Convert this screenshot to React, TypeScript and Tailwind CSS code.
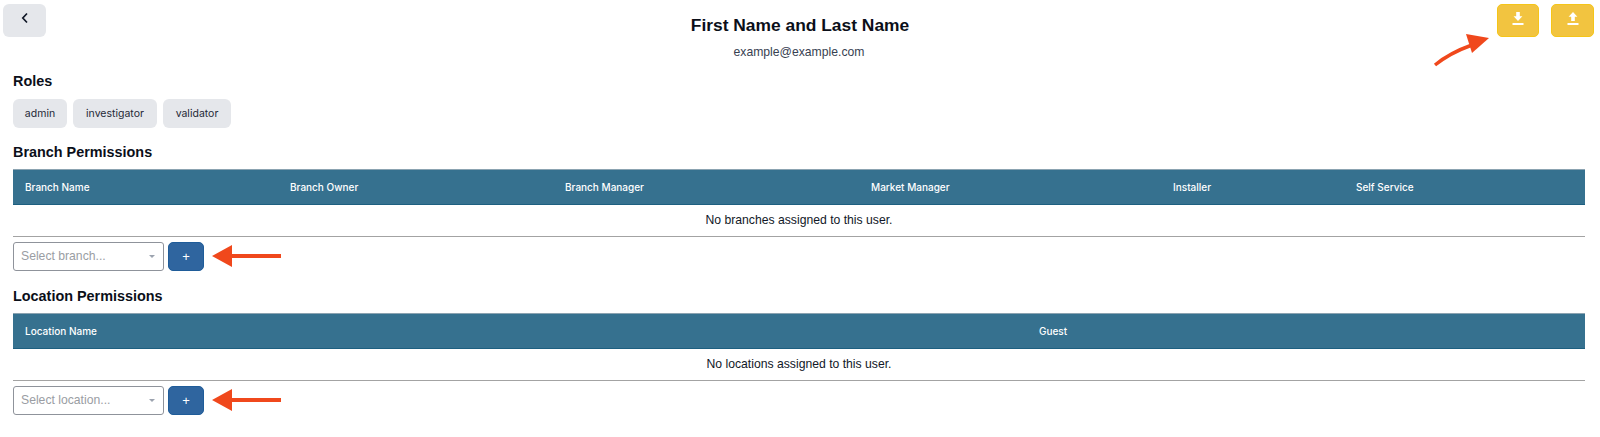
const ArrowLeft = ({ className }: { className: string }) => (
  <svg className={className} width="70" height="22" viewBox="0 0 70 22" fill="none">
    <path d="M0 11 L20 0 L20 9 L69 9 L69 13 L20 13 L20 22 Z" fill="#f0481c" />
  </svg>
);

const Download = () => (
  <svg width="12" height="13" viewBox="0 0 12 13" fill="white">
    <path d="M4.2 0h3.6v4.2h2.6L6 9 1.6 4.2h2.6z" />
    <rect x="0.5" y="11" width="11" height="2" />
  </svg>
);

const Upload = () => (
  <svg width="12" height="13" viewBox="0 0 12 13" fill="white">
    <path d="M6 0l4.4 4.8H7.8V9H4.2V4.8H1.6z" />
    <rect x="0.5" y="11" width="11" height="2" />
  </svg>
);

function AddRow({ placeholder }: { placeholder: string }) {
  return (
    <div className="mt-[5px] flex items-center gap-[4px]">
      <div className="flex h-[29px] w-[151px] items-center justify-between rounded-[3px] border border-[#8f939b] bg-white pl-[7px] pr-[8px] text-[12.2px] text-[#9a9da3]">
        <span>{placeholder}</span>
        <span className="h-0 w-0 border-x-[3.5px] border-t-[3.5px] border-x-transparent border-t-[#9ca3af]" />
      </div>
      <button className="flex h-[29px] w-[36px] items-center justify-center rounded-[5px] border border-[#1f5c99] bg-[#2f659f] text-[13px] text-white">
        +
      </button>
      <ArrowLeft className="ml-[4px] -mt-[2px]" />
    </div>
  );
}

function PermissionTable({
  columns,
  empty,
}: {
  columns: { name: string; width: string }[];
  empty: string;
}) {
  return (
    <table className="mt-[8px] w-full table-fixed border-b border-[#a3a3a3]">
      <thead>
        <tr className="h-[35px] border-y border-t-[#8ba3b1] border-b-[#1d5f80] bg-[#36718f] text-left text-white">
          {columns.map((col) => (
            <th key={col.name} className={`${col.width} pl-[12px] font-['Inter',sans-serif] text-[10px] font-medium`}>
              {col.name}
            </th>
          ))}
        </tr>
      </thead>
      <tbody>
        <tr className="h-[32px] text-center text-[12.2px] text-[#111827]">
          <td colSpan={columns.length}>{empty}</td>
        </tr>
      </tbody>
    </table>
  );
}

export default function App() {
  return (
    <div className="h-[437px] overflow-hidden bg-white font-['Liberation_Sans',Arial,sans-serif] text-[#0b0f19]">
      <header className="relative flex justify-between pl-[3px] pr-[6px] pt-[4px]">
        <button className="flex h-[33px] w-[43px] items-start justify-center rounded-[6px] bg-[#e5e7eb] pt-[7px]">
          <svg width="14" height="14" viewBox="0 0 14 14" fill="none" stroke="#111827" strokeWidth="1.7">
            <path d="M9 2.5 L4.8 7 L9 11.5" />
          </svg>
        </button>
        <div className="absolute left-0 right-0 top-0 text-center">
          <h1 className="mt-[14px] text-[17.4px] font-bold leading-[22px]">First Name and Last Name</h1>
          <p className="mt-[9px] pr-[2px] text-[12.2px] leading-[14px] text-[#374151]">example@example.com</p>
        </div>
        <div className="relative flex gap-[12px]">
          <svg className="absolute left-[-65px] top-[26px]" width="60" height="38" viewBox="0 0 60 38" fill="none">
            <path d="M3 35 C14 26 26 20 40 15" stroke="#f0481c" strokeWidth="3.5" />
            <path d="M34 4 L57 8 L40 23 Z" fill="#f0481c" />
          </svg>
          <button className="flex h-[33px] w-[42px] items-start justify-center rounded-[5px] border border-[#f5c518] bg-[#f2c440] pt-[7px]">
            <Download />
          </button>
          <button className="flex h-[33px] w-[43px] items-start justify-center rounded-[5px] border border-[#f5c518] bg-[#f2c440] pt-[7px]">
            <Upload />
          </button>
        </div>
      </header>

      <main className="pl-[13px] pr-[15px]">
        <h2 className="mt-[35px] text-[14.4px] font-bold leading-[18px]">Roles</h2>
        <div className="mt-[9px] flex gap-[6px] font-['Inter',sans-serif] text-[10.5px] text-[#1f2937]">
          <span className="flex h-[29px] w-[54px] items-center justify-center rounded-[6px] bg-[#e5e7eb]">admin</span>
          <span className="flex h-[29px] w-[84px] items-center justify-center rounded-[6px] bg-[#e5e7eb]">investigator</span>
          <span className="flex h-[29px] w-[68px] items-center justify-center rounded-[6px] bg-[#e5e7eb]">validator</span>
        </div>

        <h2 className="mt-[15px] text-[14.4px] font-bold leading-[18px]">Branch Permissions</h2>
        <PermissionTable
          columns={[
            { name: 'Branch Name', width: 'w-[265px]' },
            { name: 'Branch Owner', width: 'w-[275px]' },
            { name: 'Branch Manager', width: 'w-[306px]' },
            { name: 'Market Manager', width: 'w-[302px]' },
            { name: 'Installer', width: 'w-[183px]' },
            { name: 'Self Service', width: 'w-auto' },
          ]}
          empty="No branches assigned to this user."
        />
        <AddRow placeholder="Select branch..." />

        <h2 className="mt-[16px] text-[14.4px] font-bold leading-[18px]">Location Permissions</h2>
        <PermissionTable
          columns={[
            { name: 'Location Name', width: 'w-[1014px]' },
            { name: 'Guest', width: 'w-auto' },
          ]}
          empty="No locations assigned to this user."
        />
        <AddRow placeholder="Select location..." />
      </main>
    </div>
  );
}
